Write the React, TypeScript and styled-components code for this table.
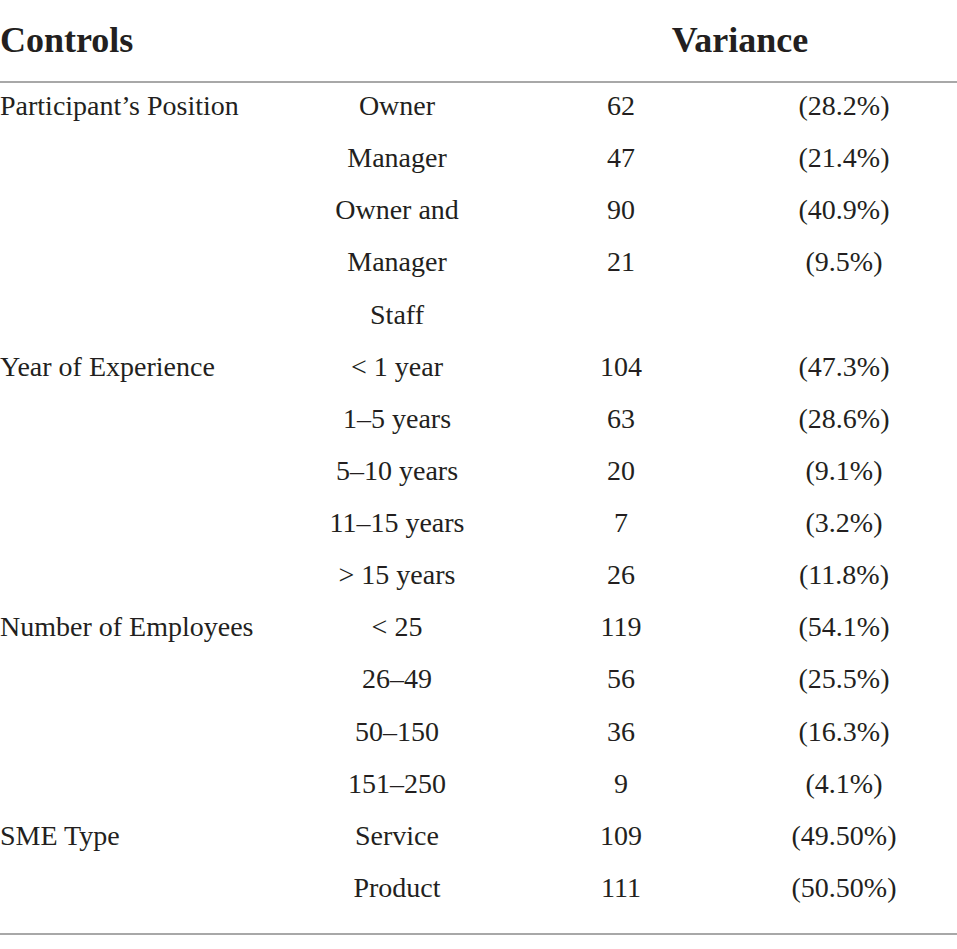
import React from "react";
import styled, { createGlobalStyle } from "styled-components";

const GlobalStyle = createGlobalStyle`
  html, body {
    margin: 0;
    padding: 0;
    background: #ffffff;
  }
  body {
    font-family: "Liberation Serif", "Times New Roman", serif;
    color: #231f20;
  }
`;

const COLS = "290px 214px 234px 212px";

const Table = styled.div`
  width: 957px;
  display: flex;
  flex-direction: column;
`;

const HeaderRow = styled.div`
  display: grid;
  grid-template-columns: ${COLS};
  padding: 22px 0 23px;
  border-bottom: 2px solid #a8a8a8;
  font-size: 36px;
  font-weight: bold;
  line-height: 1;
`;

const HeadCell = styled.div<{ $span?: boolean; $shift?: number }>`
  grid-column: ${(p) => (p.$span ? "3 / 5" : "auto")};
  text-align: ${(p) => (p.$span ? "center" : "left")};
  padding-left: ${(p) => p.$shift ?? 0}px;
`;

const Body = styled.div`
  display: flex;
  flex-direction: column;
  padding-bottom: 16px;
  border-bottom: 2px solid #a8a8a8;
`;

const Row = styled.div`
  display: grid;
  grid-template-columns: ${COLS};
  height: 52.13px;
  box-sizing: border-box;
  padding-top: 9px;
  font-size: 28px;
  line-height: 1;
  white-space: nowrap;
`;

const Cell = styled.div<{ $align?: "left" | "center" }>`
  text-align: ${(p) => p.$align ?? "center"};
`;

type R = [string, string, string, string];

const rows: R[] = [
  ["Participant\u2019s Position", "Owner", "62", "(28.2%)"],
  ["", "Manager", "47", "(21.4%)"],
  ["", "Owner and", "90", "(40.9%)"],
  ["", "Manager", "21", "(9.5%)"],
  ["", "Staff", "", ""],
  ["Year of Experience", "< 1 year", "104", "(47.3%)"],
  ["", "1\u20135 years", "63", "(28.6%)"],
  ["", "5\u201310 years", "20", "(9.1%)"],
  ["", "11\u201315 years", "7", "(3.2%)"],
  ["", "> 15 years", "26", "(11.8%)"],
  ["Number of Employees", "< 25", "119", "(54.1%)"],
  ["", "26\u201349", "56", "(25.5%)"],
  ["", "50\u2013150", "36", "(16.3%)"],
  ["", "151\u2013250", "9", "(4.1%)"],
  ["SME Type", "Service", "109", "(49.50%)"],
  ["", "Product", "111", "(50.50%)"],
];

export default function App() {
  return (
    <>
      <GlobalStyle />
      <Table>
        <HeaderRow>
          <HeadCell>Controls</HeadCell>
          <HeadCell $span $shift={26}>
            Variance
          </HeadCell>
        </HeaderRow>
        <Body>
          {rows.map((r, i) => (
            <Row key={i}>
              <Cell $align="left">{r[0]}</Cell>
              <Cell>{r[1]}</Cell>
              <Cell>{r[2]}</Cell>
              <Cell>{r[3]}</Cell>
            </Row>
          ))}
        </Body>
      </Table>
    </>
  );
}
